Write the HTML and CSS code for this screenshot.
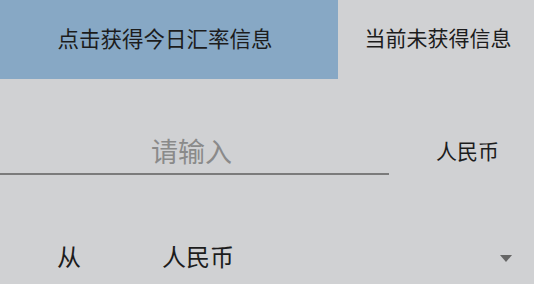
FILE: index.html
```html
<!DOCTYPE html>
<html lang="zh-CN">
<head>
<meta charset="utf-8">
<title>汇率</title>
<link rel="stylesheet" href="styles.css">
</head>
<body>
<div class="app">
  <div class="top">
    <div class="btn">点击获得今日汇率信息</div>
    <div class="status">当前未获得信息</div>
  </div>
  <div class="input-row">
    <div class="field"><input class="amount" type="text" placeholder="请输入"></div>
    <div class="unit">人民币</div>
  </div>
  <div class="from-row">
    <div class="from-label">从</div>
    <div class="select-value">人民币</div>
    <div class="caret"></div>
  </div>
</div>
</body>
</html>
```
FILE: styles.css
```css
html, body {
  margin: 0;
  padding: 0;
}
body {
  background: #d0d1d3;
  font-family: "Noto Sans CJK SC", "Noto Sans", sans-serif;
  color: #1c1c1c;
}
.app {
  width: 534px;
  height: 284px;
  overflow: hidden;
}
.top {
  display: flex;
  height: 79px;
}
.btn {
  width: 338px;
  background: #87a8c5;
  display: flex;
  align-items: center;
  justify-content: center;
  font-size: 21.5px;
  padding: 0 8px 5px 0;
  box-sizing: border-box;
}
.status {
  flex: 1;
  display: flex;
  align-items: center;
  justify-content: center;
  font-size: 21px;
  padding: 0 0 5px 4px;
}
.input-row {
  display: flex;
  margin-top: 49px;
}
.field {
  width: 389px;
  height: 45px;
  border-bottom: 2px solid #7b7b7b;
}
.amount {
  width: 100%;
  height: 45px;
  box-sizing: border-box;
  border: none;
  background: transparent;
  outline: none;
  text-align: center;
  font-family: inherit;
  font-size: 27px;
  color: #1c1c1c;
  padding: 0 6px 0 0;
  margin: 0;
}
.amount::placeholder {
  color: #8a8a8a;
}
.unit {
  flex: 1;
  padding-left: 47px;
  font-size: 21px;
  line-height: 45px;
}
.from-row {
  display: flex;
  align-items: center;
  margin-top: 58px;
  height: 44px;
  font-size: 24px;
}
.from-label {
  width: 105px;
  padding-left: 57px;
}
.select-value {
  flex: 1;
}
.caret {
  width: 0;
  height: 0;
  border-left: 6.5px solid transparent;
  border-right: 6.5px solid transparent;
  border-top: 7.5px solid #666;
  margin-right: 22px;
  margin-top: 6px;
}
```
